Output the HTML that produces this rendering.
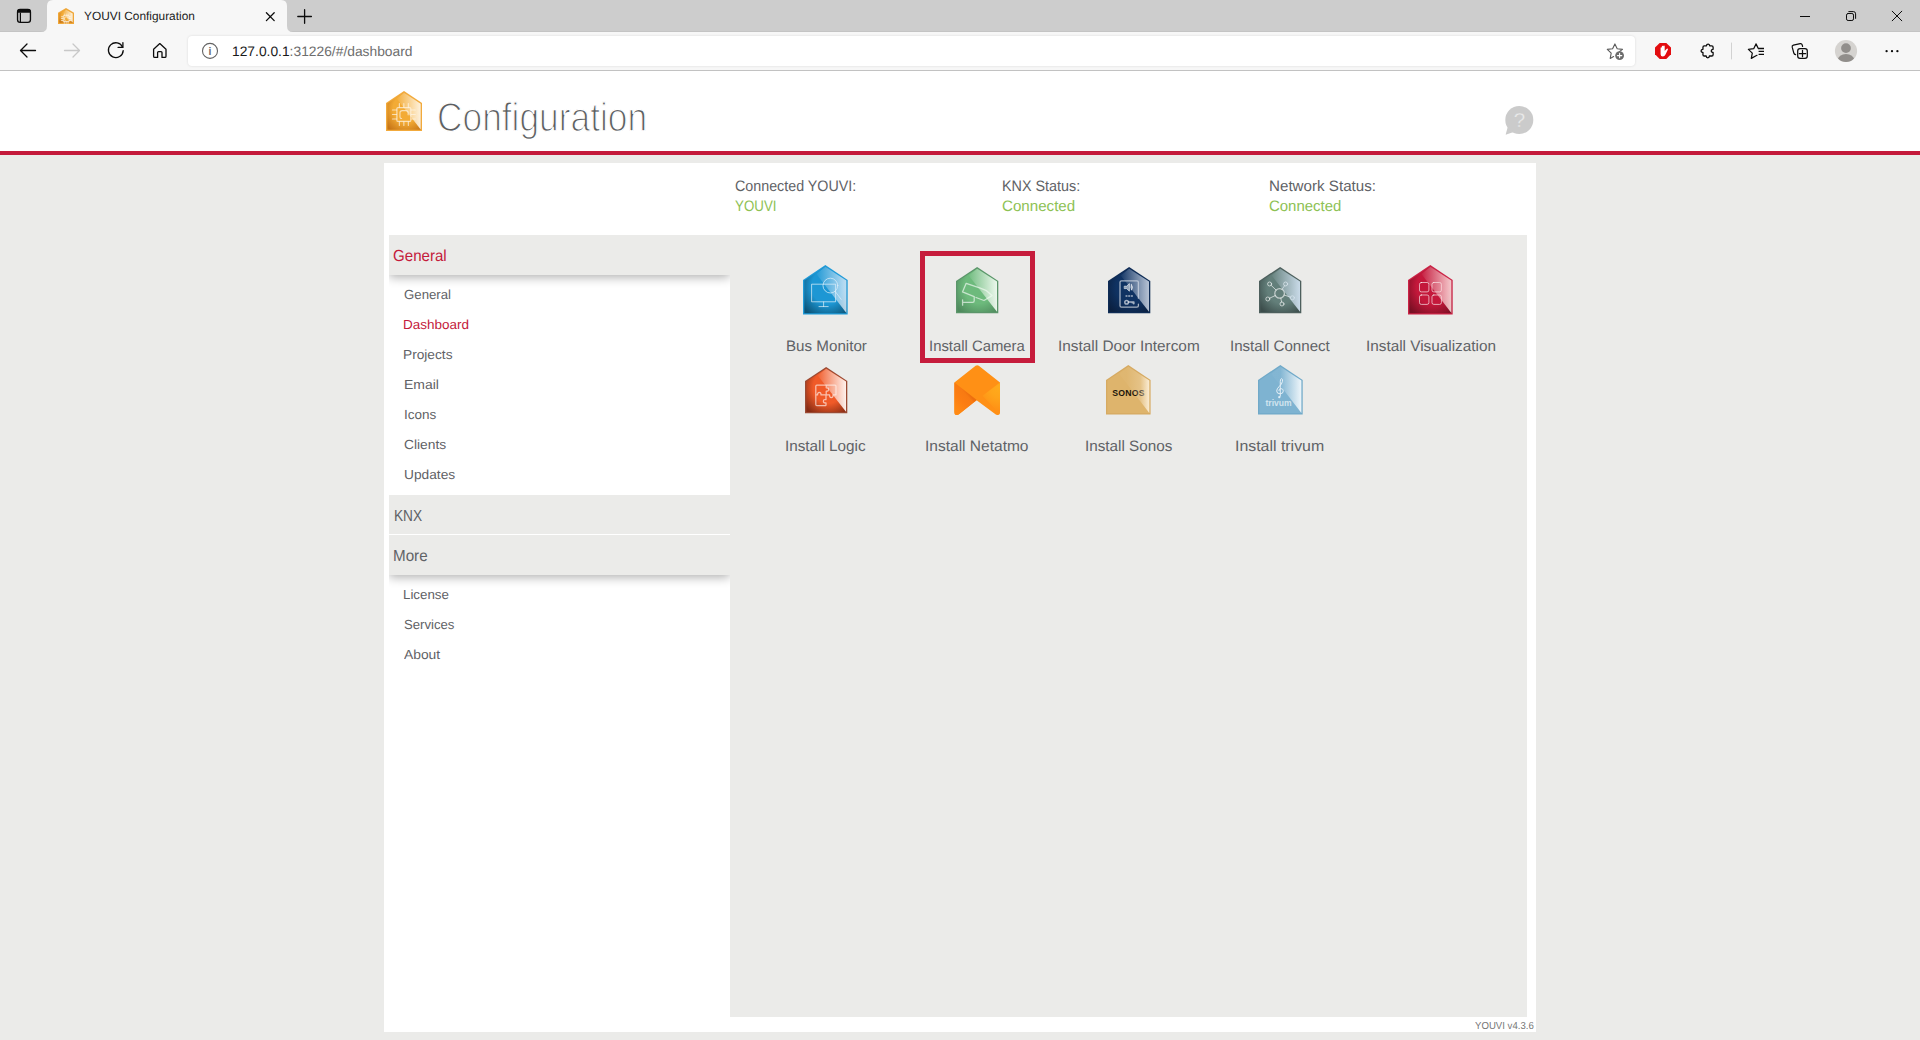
<!DOCTYPE html>
<html lang="en"><head><meta charset="utf-8"><title>YOUVI Configuration</title>
<style>
html,body{margin:0;padding:0}
body{width:1920px;height:1040px;overflow:hidden;background:#ebebe9;position:relative;font-family:"Liberation Sans", Arial, sans-serif}
.a{position:absolute}
.t{position:absolute;white-space:pre;line-height:1;text-rendering:geometricPrecision;transform-origin:0 0;font-family:"Liberation Sans", Arial, sans-serif}
svg{position:absolute;overflow:visible}

#strip{left:0;top:0;width:1920px;height:32px;background:#cdcdcd}
#bar{left:0;top:32px;width:1920px;height:38px;background:#f7f7f7}
#barline{left:0;top:70px;width:1920px;height:1px;background:#c2c2c2}
#stripline{left:0;top:31px;width:1920px;height:1px;background:#c4c4c4}
#addr{left:188px;top:36px;width:1447px;height:30px;background:#fff;border-radius:4px;box-shadow:0 0 2.5px rgba(0,0,0,.13)}
#pagebg{left:0;top:71px;width:1920px;height:80px;background:#fff}
#redbar{left:0;top:151px;width:1920px;height:4px;background:#c41a3b}
#panel{left:384px;top:163px;width:1152px;height:869px;background:#fff}
#content{left:730px;top:235px;width:797px;height:782px;background:#ebebe9}
.mh{left:389px;width:341px;height:40px;background:#ebebe9}
.shw{left:389px;width:341px;height:24px;overflow:hidden}
.shw i{position:absolute;left:0;top:-40px;width:341px;height:40px;box-shadow:0 2px 10px rgba(0,0,0,.33)}
#sel{left:920px;top:251px;width:105px;height:102px;border:5px solid #c61c3c}

</style></head><body>

<div id="strip" class="a"></div><div id="stripline" class="a"></div>
<div id="bar" class="a"></div>
<div id="barline" class="a"></div>
<svg style="left:0;top:0" width="1920" height="71" viewBox="0 0 1920 71" fill="none" stroke-linecap="round" stroke-linejoin="round">
  <path d="M41 32 Q47 32 47 26 L47 6 Q47 0 53 0 L281 0 Q287 0 287 6 L287 26 Q287 32 293 32 Z" fill="#f7f7f7"/>
  <!-- vertical tabs icon -->
  <rect x="17.55" y="9.45" width="12.9" height="12.9" rx="2.6" stroke="#0c0c0c" stroke-width="1.35"/>
  <path d="M20.4 12.6 v9.6" stroke="#0c0c0c" stroke-width="1.25" stroke-linecap="butt"/>
  <path d="M17.3 12.8 v-1.2 q0 -2.6 2.600 -2.600 h8.200 q2.600 0 2.600 2.600 v1.200 z" fill="#0c0c0c"/>
  <!-- favicon placeholder -->
  <!-- tab close -->
  <path d="M266.4 12.8 l7.8 7.8 M274.2 12.8 l-7.8 7.8" stroke="#0c0c0c" stroke-width="1.3"/>
  <!-- new tab -->
  <path d="M297.8 16.5 h13.6 M304.6 9.7 v13.6" stroke="#0c0c0c" stroke-width="1.3"/>
  <!-- window controls -->
  <path d="M1800 16.5 h10" stroke="#0c0c0c" stroke-width="1" stroke-linecap="butt"/>
  <rect x="1846.5" y="13.5" width="7" height="7" rx="1.6" stroke="#0c0c0c" stroke-width="1"/>
  <path d="M1848.8 11.6 h4.6 q2.2 0 2.2 2.2 v4.6" stroke="#0c0c0c" stroke-width="1"/>
  <path d="M1892.2 11.2 l9.6 9.6 M1901.8 11.2 l-9.6 9.6" stroke="#0c0c0c" stroke-width="1"/>
  <!-- back -->
  <path d="M35.5 50.5 H20.8 M27 44 L20.5 50.5 L27 57" stroke="#0c0c0c" stroke-width="1.3"/>
  <!-- forward (disabled) -->
  <path d="M64.5 50.5 H79.2 M73 44 L79.5 50.5 L73 57" stroke="#c8c8c8" stroke-width="1.3"/>
  <!-- refresh -->
  <path d="M122.6 47.2 A7.4 7.4 0 1 0 123.2 50.6" stroke="#0c0c0c" stroke-width="1.3"/>
  <path d="M122.9 42.6 V47.4 H118.1" stroke="#0c0c0c" stroke-width="1.3"/>
  <!-- home -->
  <path d="M153.6 49.2 L159.8 43.6 L166 49.2 V56.2 Q166 57.4 164.8 57.4 H162 V52.6 Q162 51.6 161 51.6 H158.6 Q157.6 51.6 157.6 52.6 V57.4 H154.8 Q153.6 57.4 153.6 56.2 Z" stroke="#0c0c0c" stroke-width="1.3"/>
</svg>
<div id="addr" class="a"></div>
<svg style="left:0;top:0" width="1920" height="71" viewBox="0 0 1920 71" fill="none" stroke-linecap="round" stroke-linejoin="round">
  <!-- info -->
  <circle cx="210" cy="50.9" r="7.5" stroke="#636363" stroke-width="1.1"/>
  <text x="210" y="54.6" text-anchor="middle" font-family="Liberation Sans, sans-serif" font-weight="bold" font-size="10.4" fill="#6a6a6a" stroke="none">i</text>
  <!-- add favourite star -->
  <path d="M1619.4 51.6 L1622.5 49.4 L1617.2 48.7 L1614.9 43.9 L1612.6 48.7 L1607.3 49.4 L1611.2 53.1 L1610.2 58.4 L1613.6 56.5" stroke="#5a5a5a" stroke-width="1.1"/>
  <circle cx="1619.6" cy="55.6" r="4.4" fill="#6b6b6b"/>
  <path d="M1617.4 55.6 h4.4 M1619.6 53.4 v4.4" stroke="#fff" stroke-width="1.1"/>
  <!-- ABP -->
  <path d="M1659.7 42.9 h6.6 l4.7 4.7 v6.6 l-4.7 4.7 h-6.6 l-4.7 -4.7 v-6.6 z" fill="#e30d10"/>
  <path d="M1660.6 52.6 V48 Q1660.6 47.3 1661.2 47.3 Q1661.8 47.3 1661.8 48 V46.5 Q1661.8 45.7 1662.55 45.7 Q1663.3 45.7 1663.3 46.5 V46.300 Q1663.300 45.600 1664 45.600 Q1664.700 45.600 1664.700 46.300 V51 L1666.500 49 Q1667.200 48.300 1667.800 48.800 Q1668.200 49.300 1667.700 50.100 L1665.500 54.500 Q1664.600 56.600 1662.800 56.600 Q1660.600 56.600 1660.600 54.200 Z" fill="#fff" stroke="none"/>
  <!-- extensions puzzle -->
  <path d="M1704.25 45.85 H1706.5 A1.6 1.8 0 1 1 1709.6999999999998 45.85 H1711.8 Q1713.1 45.85 1713.1 47.15 V49.3 A1.8 1.6 0 1 0 1713.1 52.5 V54.7 Q1713.1 56.0 1711.8 56.0 H1709.3999999999999 A1.6 1.8 0 1 1 1706.2 56.0 H1704.25 Q1702.95 56.0 1702.95 54.7 V52.5 A1.8 1.6 0 1 1 1702.95 49.3 V47.15 Q1702.95 45.85 1704.25 45.85 Z" stroke="#0c0c0c" stroke-width="1.3"/>
  <path d="M1731.5 43 V59" stroke="#d2d2d2" stroke-width="1"/>
  <!-- favourites -->
  <path d="M1758.6 48.500 L1758.300 48.500 L1756 43.900 L1753.700 48.700 L1748.400 49.400 L1752.300 53.100 L1751.300 58.400 L1756 55.800 L1757 55.300" stroke="#0c0c0c" stroke-width="1.25"/>
  <path d="M1758.600 48.500 h5.400 M1758.600 51.400 h5.400 M1758.600 54.300 h5.400" stroke="#0c0c0c" stroke-width="1.35" stroke-linecap="butt"/>
  <!-- collections -->
  <path d="M1795.600 54.600 Q1794.200 54.400 1793.800 53 L1792.200 47.200 Q1791.800 45.600 1793.400 45.100 L1800.200 43.700 Q1801.700 43.400 1802.200 44.900 L1802.600 46.500" stroke="#0c0c0c" stroke-width="1.2"/>
  <rect x="1797.700" y="48.700" width="9.600" height="9.600" rx="2.300" stroke="#0c0c0c" stroke-width="1.25"/>
  <path d="M1799.300 53.500 h6.400 M1802.500 50.300 v6.400" stroke="#0c0c0c" stroke-width="1.25"/>
  <!-- profile -->
  <clipPath id="pc"><circle cx="1846" cy="51" r="11"/></clipPath>
  <circle cx="1846" cy="51" r="11.1" fill="#d5d3d0"/>
  <circle cx="1846" cy="48.100" r="4.900" fill="#918e8b"/>
  <ellipse cx="1846" cy="60.300" rx="8.200" ry="6.300" fill="#918e8b" clip-path="url(#pc)"/>
  <!-- more -->
  <circle cx="1886.6" cy="51.2" r="1.15" fill="#0c0c0c"/><circle cx="1892" cy="51.2" r="1.15" fill="#0c0c0c"/><circle cx="1897.4" cy="51.2" r="1.15" fill="#0c0c0c"/>
</svg>


<div id="pagebg" class="a"></div>
<div id="redbar" class="a"></div>
<div id="panel" class="a"></div>
<div id="content" class="a"></div>
<div class="a mh" style="top:235px"></div><div class="a shw" style="top:275px"><i></i></div>
<div class="a mh" style="top:495px;height:39px"></div>
<div class="a mh" style="top:535px"></div><div class="a shw" style="top:575px"><i></i></div>
<div id="sel" class="a"></div>
<svg style="left:386px;top:91px" width="36" height="40" viewBox="0 0 36 40">
<defs><radialGradient id="Lr" cx="55%" cy="43%" r="72%"><stop offset="0" stop-color="#f3ab35"/><stop offset=".52" stop-color="#f3ab35"/><stop offset="1" stop-color="#c77617"/></radialGradient>
<linearGradient id="Ll" x1="0" x2="1" y1="0" y2="0"><stop offset="0" stop-color="#fff6e6" stop-opacity=".04"/><stop offset="1" stop-color="#fff6e6" stop-opacity="0.95"/></linearGradient></defs>
<path d="M18.0 0 L36 12.0 V40 H0 V12.0 Z" fill="#f2aa3c"/><path d="M18.0 1.56 L34.7 12.585 V38.7 H1.3 V12.585 Z" fill="url(#Lr)"/>
<g fill="none" stroke="#fff" stroke-opacity=".62" stroke-width="1" stroke-linecap="round" stroke-linejoin="round"><g transform="scale(1.02) translate(-0.3,-0.6)"><rect x="11" y="16.800" width="13.600" height="13.600" rx="1" stroke-width="1.200"/><path d="M15.600 27.600 q-1.600 0 -1.600 -1.600 v-4 q0 -2.200 2.200 -2.200 h3.600 q2.200 0 2.200 2.200 v2" stroke-width="1.100"/><path d="M13.400 16.400 v-3.600 M17.800 16.400 v-3.600 M22.200 16.400 v-3.600 M13.400 30.800 v3.600 M17.800 30.800 v3.600 M22.200 30.800 v3.600 M10.600 19.200 h-4 M10.600 23.600 h-4 M10.600 28 h-4 M25 19.200 h4 M25 23.600 h4 M25 28 h4" stroke-width="1.100"/></g></g>
<path d="M10.799999999999999 7.820000000000001 L18.0 1.8199999999999998 L34.7 12.65 V38.400000000000006 Z" fill="url(#Ll)"/>
</svg>
<svg style="left:58px;top:8px" width="16" height="16" viewBox="0 0 16 16">
<defs><radialGradient id="Fr" cx="55%" cy="43%" r="72%"><stop offset="0" stop-color="#f2aa36"/><stop offset=".52" stop-color="#f2aa36"/><stop offset="1" stop-color="#c47214"/></radialGradient>
<linearGradient id="Fl" x1="0" x2="1" y1="0" y2="0"><stop offset="0" stop-color="#fff6e6" stop-opacity=".04"/><stop offset="1" stop-color="#fff6e6" stop-opacity="0.95"/></linearGradient></defs>
<path d="M8.0 0 L16 4.8 V16 H0 V4.8 Z" fill="#f0a738"/><path d="M8.0 1.56 L14.7 5.385 V14.7 H1.3 V5.385 Z" fill="url(#Fr)"/>
<g fill="none" stroke="#fff" stroke-opacity=".62" stroke-width="1" stroke-linecap="round" stroke-linejoin="round"><g transform="scale(.43) translate(1.2,1)" stroke-width="2.4"><rect x="11" y="16.800" width="13.600" height="13.600" rx="1" /><path d="M15.600 27.600 q-1.600 0 -1.600 -1.600 v-4 q0 -2.200 2.200 -2.200 h3.600 q2.200 0 2.200 2.200 v2" /><path d="M13.400 16.400 v-3.600 M17.800 16.400 v-3.600 M22.200 16.400 v-3.600 M13.400 30.800 v3.600 M17.800 30.800 v3.600 M22.200 30.800 v3.600 M10.600 19.200 h-4 M10.600 23.600 h-4 M10.600 28 h-4 M25 19.200 h4 M25 23.600 h4 M25 28 h4" /></g></g>
<path d="M4.8 4.9399999999999995 L8.0 1.8199999999999998 L14.7 5.45 V14.399999999999999 Z" fill="url(#Fl)"/>
</svg>
<svg style="left:1500px;top:100px" width="40" height="40" viewBox="0 0 40 40">
<circle cx="19.3" cy="20" r="14" fill="#cbcbcb"/><path d="M7.600 27.600 L5.600 34.800 L14.400 31.800 Z" fill="#cbcbcb"/>
<text x="19.5" y="27" text-anchor="middle" font-family="Liberation Sans, sans-serif" font-size="20.5" fill="#ebebeb" stroke="#cbcbcb" stroke-width=".3">?</text>
</svg>
<svg style="left:803.4px;top:265.1px" width="44.7" height="49.6" viewBox="0 0 44.7 49.6">
<defs><radialGradient id="ar" cx="55%" cy="43%" r="72%"><stop offset="0" stop-color="#1d97d4"/><stop offset=".52" stop-color="#1d97d4"/><stop offset="1" stop-color="#0c5478"/></radialGradient>
<linearGradient id="al" x1="0" x2="1" y1="0" y2="0"><stop offset="0" stop-color="#dcecfa" stop-opacity=".04"/><stop offset="1" stop-color="#dcecfa" stop-opacity="0.85"/></linearGradient></defs>
<path d="M22.35 0 L44.7 14.879999999999999 V49.6 H0 V14.879999999999999 Z" fill="#1f9bd9"/><path d="M22.35 1.56 L43.400000000000006 15.465 V48.300000000000004 H1.3 V15.465 Z" fill="url(#ar)"/>
<g fill="none" stroke="#fff" stroke-opacity=".62" stroke-width="1" stroke-linecap="round" stroke-linejoin="round"><rect x="9" y="19.2" width="23.6" height="17.6"/><path d="M20.6 37 v4.400 M16 41.6 h9.2"/><circle cx="27.4" cy="20.6" r="7.4"/><path d="M32.200 26.400 l6 8"/></g>
<path d="M13.41 8.972 L22.35 1.8199999999999998 L43.400000000000006 15.53 V48.00000000000001 Z" fill="url(#al)"/>
</svg><svg style="left:955.8px;top:266.9px" width="42.3" height="46.3" viewBox="0 0 42.3 46.3">
<defs><radialGradient id="br" cx="55%" cy="43%" r="72%"><stop offset="0" stop-color="#6dba7c"/><stop offset=".52" stop-color="#6dba7c"/><stop offset="1" stop-color="#4f8a5d"/></radialGradient>
<linearGradient id="bl" x1="0" x2="1" y1="0" y2="0"><stop offset="0" stop-color="#f2fbf2" stop-opacity=".04"/><stop offset="1" stop-color="#f2fbf2" stop-opacity="0.95"/></linearGradient></defs>
<path d="M21.15 0 L42.3 13.889999999999999 V46.3 H0 V13.889999999999999 Z" fill="#5b956a"/><path d="M21.15 1.56 L41.0 14.475 V45.0 H1.3 V14.475 Z" fill="url(#br)"/>
<g fill="none" stroke="#fff" stroke-opacity=".62" stroke-width="1" stroke-linecap="round" stroke-linejoin="round"><path d="M6.5 24.9 L10.2 16.3 L24.3 21.2 L30.5 23.7 L36 28.6 L28 33.5 L20 30.5 M18.2 29.6 L6.5 24.9 M18.2 29.6 V33.8 Q18.2 35.4 16.6 35.4 H6.8 M6.6 32.8 V38.2" stroke-width="1.3"/></g>
<path d="M12.69 8.575999999999999 L21.15 1.8199999999999998 L41.0 14.54 V44.7 Z" fill="url(#bl)"/>
</svg><svg style="left:1108.1px;top:266.9px" width="42.3" height="46.3" viewBox="0 0 42.3 46.3">
<defs><radialGradient id="cr" cx="55%" cy="43%" r="72%"><stop offset="0" stop-color="#0f3262"/><stop offset=".52" stop-color="#0f3262"/><stop offset="1" stop-color="#0b2040"/></radialGradient>
<linearGradient id="cl" x1="0" x2="1" y1="0" y2="0"><stop offset="0" stop-color="#c9d3e2" stop-opacity=".04"/><stop offset="1" stop-color="#c9d3e2" stop-opacity="0.9"/></linearGradient></defs>
<path d="M21.15 0 L42.3 13.889999999999999 V46.3 H0 V13.889999999999999 Z" fill="#0f2c55"/><path d="M21.15 1.56 L41.0 14.475 V45.0 H1.3 V14.475 Z" fill="url(#cr)"/>
<g fill="none" stroke="#fff" stroke-opacity=".62" stroke-width="1" stroke-linecap="round" stroke-linejoin="round"><path d="M30.4 37.200 v1.600 q0 1.400 -1.400 1.400 h-15.600 q-1.400 0 -1.400 -1.400 v-23.600 q0 -1.400 1.400 -1.400 h15.600 q1.400 0 1.400 1.400 v16" stroke-width="1.3"/><path d="M16.600 19.200 h2 l2.800 -2.600 v7.600 l-2.800 -2.600 h-2 z" stroke-width="1" fill="#fff" fill-opacity=".55"/><path d="M23.400 17.600 q2.400 2.800 0 5.600 q-.9 -2.800 0 -5.600 z" stroke-width="1" fill="#fff" fill-opacity=".6"/><path d="M18 29 h1 M20.700 29 h1 M23.400 29 h1" stroke-width="1.300"/><circle cx="18.600" cy="35.200" r="1.800" stroke-width="1.500"/><path d="M20.600 35 h5.200 M24.200 35.600 h1.600 v1" stroke-width="1.700"/></g>
<path d="M12.69 8.575999999999999 L21.15 1.8199999999999998 L41.0 14.54 V44.7 Z" fill="url(#cl)"/>
</svg><svg style="left:1258.8px;top:266.9px" width="42.3" height="46.3" viewBox="0 0 42.3 46.3">
<defs><radialGradient id="dr" cx="55%" cy="43%" r="72%"><stop offset="0" stop-color="#637f7a"/><stop offset=".52" stop-color="#637f7a"/><stop offset="1" stop-color="#3c4d4b"/></radialGradient>
<linearGradient id="dl" x1="0" x2="1" y1="0" y2="0"><stop offset="0" stop-color="#cfe0ef" stop-opacity=".04"/><stop offset="1" stop-color="#cfe0ef" stop-opacity="0.95"/></linearGradient></defs>
<path d="M21.15 0 L42.3 13.889999999999999 V46.3 H0 V13.889999999999999 Z" fill="#4d5f5d"/><path d="M21.15 1.56 L41.0 14.475 V45.0 H1.3 V14.475 Z" fill="url(#dr)"/>
<g fill="none" stroke="#fff" stroke-opacity=".62" stroke-width="1" stroke-linecap="round" stroke-linejoin="round"><circle cx="20.600" cy="26.400" r="4.800" stroke-width="1.200"/><circle cx="10.600" cy="17" r="2" /><circle cx="26.600" cy="17" r="2"/><circle cx="33.400" cy="30.800" r="2"/><circle cx="23" cy="37" r="2"/><circle cx="8.800" cy="32" r="2"/><path d="M12.200 18.400 l4.800 4.600 M25.600 18.800 l-2.600 3.600 M25.200 28 l6.400 2.200 M21.800 31.200 l.8 3.800 M10.600 31.200 l5.600 -2.600"/></g>
<path d="M12.69 8.575999999999999 L21.15 1.8199999999999998 L41.0 14.54 V44.7 Z" fill="url(#dl)"/>
</svg><svg style="left:1408.4px;top:265.1px" width="44.7" height="49.6" viewBox="0 0 44.7 49.6">
<defs><radialGradient id="er" cx="55%" cy="43%" r="72%"><stop offset="0" stop-color="#c4183b"/><stop offset=".52" stop-color="#c4183b"/><stop offset="1" stop-color="#780f23"/></radialGradient>
<linearGradient id="el" x1="0" x2="1" y1="0" y2="0"><stop offset="0" stop-color="#fbdcdc" stop-opacity=".04"/><stop offset="1" stop-color="#fbdcdc" stop-opacity="0.9"/></linearGradient></defs>
<path d="M22.35 0 L44.7 14.879999999999999 V49.6 H0 V14.879999999999999 Z" fill="#cb2447"/><path d="M22.35 1.56 L43.400000000000006 15.465 V48.300000000000004 H1.3 V15.465 Z" fill="url(#er)"/>
<g fill="none" stroke="#fff" stroke-opacity=".62" stroke-width="1" stroke-linecap="round" stroke-linejoin="round"><rect x="11.500" y="17.500" width="9.400" height="9.400" rx="1.800"/><rect x="24" y="17.500" width="9.400" height="9.400" rx="1.800"/><rect x="11.500" y="30" width="9.400" height="9.400" rx="1.800"/><rect x="24" y="30" width="9.400" height="9.400" rx="1.800"/></g>
<path d="M13.41 8.972 L22.35 1.8199999999999998 L43.400000000000006 15.53 V48.00000000000001 Z" fill="url(#el)"/>
</svg><svg style="left:804.8px;top:366.9px" width="42.3" height="46.3" viewBox="0 0 42.3 46.3">
<defs><radialGradient id="fr" cx="55%" cy="43%" r="72%"><stop offset="0" stop-color="#f05a28"/><stop offset=".52" stop-color="#f05a28"/><stop offset="1" stop-color="#862c14"/></radialGradient>
<linearGradient id="fl" x1="0" x2="1" y1="0" y2="0"><stop offset="0" stop-color="#fff1ec" stop-opacity=".04"/><stop offset="1" stop-color="#fff1ec" stop-opacity="1"/></linearGradient></defs>
<path d="M21.15 0 L42.3 13.889999999999999 V46.3 H0 V13.889999999999999 Z" fill="#9a4a33"/><path d="M21.15 1.56 L41.0 14.475 V45.0 H1.3 V14.475 Z" fill="url(#fr)"/>
<g fill="none" stroke="#fff" stroke-opacity=".62" stroke-width="1" stroke-linecap="round" stroke-linejoin="round"><path d="M20.600 18.200 h-8.800 q-1 0 -1 1 v18.400 q0 1 1 1 h8.600 q.6 0 .6 -.6 v-2.200 q-2.600 .4 -2.600 -1.600 t2.600 -1.600 v-4.400 M20.600 18.200 q.6 0 .6 .6 v2 q2.400 -.2 2.400 1.700 t-2.400 1.700 v3.800 M10.800 28 h1.800 q-.2 -2.600 1.700 -2.600 t1.700 2.600 h4.600 M21.200 28 h3.400 q-.2 2.600 1.700 2.600 t1.700 -2.600 h2.400 q.6 0 .6 -.6 v-8.200 q0 -1 -1 -1 h-10.400" stroke-width="1.250"/></g>
<path d="M12.69 8.575999999999999 L21.15 1.8199999999999998 L41.0 14.54 V44.7 Z" fill="url(#fl)"/>
</svg><svg style="left:1106.3px;top:365.1px" width="44.6" height="49.6" viewBox="0 0 44.6 49.6">
<defs><radialGradient id="hr" cx="55%" cy="43%" r="72%"><stop offset="0" stop-color="#deb46c"/><stop offset=".52" stop-color="#deb46c"/><stop offset="1" stop-color="#deb46c"/></radialGradient>
<linearGradient id="hl" x1="0" x2="1" y1="0" y2="0"><stop offset="0.25" stop-color="#fff6e6" stop-opacity=".04"/><stop offset="0.7" stop-color="#fff6e6" stop-opacity="0.22"/><stop offset="1" stop-color="#fff6e6" stop-opacity="0.85"/></linearGradient></defs>
<path d="M22.3 0 L44.6 14.879999999999999 V49.6 H0 V14.879999999999999 Z" fill="#d6aa62"/><path d="M22.3 1.56 L43.300000000000004 15.465 V48.300000000000004 H1.3 V15.465 Z" fill="#deb46c"/>
<g fill="none" stroke="#fff" stroke-opacity=".62" stroke-width="1" stroke-linecap="round" stroke-linejoin="round"><text x="6.2" y="31.3" font-family="Liberation Sans, sans-serif" font-weight="bold" font-size="8.7" letter-spacing=".25" fill="#1b150a" stroke="none">SONOS</text></g>
<path d="M13.38 8.972 L22.3 1.8199999999999998 L43.300000000000004 15.53 V48.00000000000001 Z" fill="url(#hl)"/>
</svg><svg style="left:1257.6px;top:365.1px" width="44.7" height="49.6" viewBox="0 0 44.7 49.6">
<defs><radialGradient id="ir" cx="55%" cy="43%" r="72%"><stop offset="0" stop-color="#7eb3d1"/><stop offset=".52" stop-color="#7eb3d1"/><stop offset="1" stop-color="#7eb3d1"/></radialGradient>
<linearGradient id="il" x1="0" x2="1" y1="0" y2="0"><stop offset="0.3" stop-color="#f4f9fc" stop-opacity=".04"/><stop offset="1" stop-color="#f4f9fc" stop-opacity="0.95"/></linearGradient></defs>
<path d="M22.35 0 L44.7 14.879999999999999 V49.6 H0 V14.879999999999999 Z" fill="#70a9c8"/><path d="M22.35 1.56 L43.400000000000006 15.465 V48.300000000000004 H1.3 V15.465 Z" fill="#7eb3d1"/>
<g fill="none" stroke="#fff" stroke-opacity=".62" stroke-width="1" stroke-linecap="round" stroke-linejoin="round"><text x="7.5" y="41.1" font-family="Liberation Sans, sans-serif" font-weight="bold" font-size="8.6" fill="#dceaf2" fill-opacity=".9" stroke="none">trivum</text><path d="M22.300 31.200 V16.400 Q22.300 13.600 23.700 13.600 Q24.900 14 24.500 16.400 Q23.900 19.200 21.100 21.600 Q18.700 23.800 18.700 26 Q18.700 28.800 22.100 28.800 Q25.300 28.800 25.300 26 Q25.300 23.600 22.900 23.600 Q20.900 23.600 20.900 25.600" stroke="#e3eef5" stroke-opacity="1"/><circle cx="21.300" cy="32.200" r="1.100" fill="#e3eef5" stroke="none"/></g>
<path d="M13.41 8.972 L22.35 1.8199999999999998 L43.400000000000006 15.53 V48.00000000000001 Z" fill="url(#il)"/>
</svg>
<svg style="left:953.8px;top:364.8px" width="46.4" height="50.4" viewBox="0 0 46.4 50.4">
<defs><linearGradient id="nl" x1=".55" y1=".28" x2=".1" y2=".85"><stop offset="0" stop-color="#ee6f0e"/><stop offset=".12" stop-color="#f87a12"/><stop offset=".5" stop-color="#fc7d12"/><stop offset="1" stop-color="#ff8a14"/></linearGradient>
<radialGradient id="nr" gradientUnits="userSpaceOnUse" cx="46" cy="22" r="24"><stop offset="0" stop-color="#ffab1c"/><stop offset=".45" stop-color="#ffa41a"/><stop offset="1" stop-color="#ff9015"/></radialGradient></defs>
<path d="M21.600 0.800 Q23.200 -0.400 24.800 0.800 L46 17.600 V46.800 Q46 51.600 41.800 49.400 L22.600 35.200 L4.600 49.400 Q0.400 51.600 0.400 46.800 V17.600 Z" fill="#ff9015"/>
<path d="M0.400 17.600 L22.800 35.050 L4.600 49.400 Q0.400 51.600 0.400 46.800 Z" fill="url(#nl)"/>
<path d="M46 17.600 V46.800 Q46 48 45.600 48.800 L28.600 30.800 Z" fill="url(#nr)"/>
</svg>

<span class="t" style="left:83.76px;top:10.80px;font-size:11.9px;color:#1a1a1a;transform:scaleX(0.9982);">YOUVI Configuration</span>
<span class="t" style="left:232.03px;top:44.70px;font-size:13.7px;color:#1a1a1a;transform:scaleX(1.0091);">127.0.0.1<span style="color:#6e6e6e">:31226/#/dashboard</span></span>
<span class="t" style="left:436.93px;top:97.55px;font-size:40.3px;color:#5c5e61;transform:scaleX(0.8766);-webkit-text-stroke:1.3px #fff;">Configuration</span>
<span class="t" style="left:735.27px;top:178.70px;font-size:15.1px;color:#5f6266;transform:scaleX(0.9466);">Connected YOUVI:</span>
<span class="t" style="left:735.31px;top:198.60px;font-size:15.1px;color:#8dc153;transform:scaleX(0.8832);">YOUVI</span>
<span class="t" style="left:1001.88px;top:178.70px;font-size:15.1px;color:#5f6266;transform:scaleX(0.9519);">KNX Status:</span>
<span class="t" style="left:1001.73px;top:198.60px;font-size:15.1px;color:#8dc153;transform:scaleX(1.0022);">Connected</span>
<span class="t" style="left:1268.83px;top:178.70px;font-size:15.1px;color:#5f6266;transform:scaleX(1.0043);">Network Status:</span>
<span class="t" style="left:1268.74px;top:198.60px;font-size:15.1px;color:#8dc153;transform:scaleX(0.9910);">Connected</span>
<span class="t" style="left:393.00px;top:248.90px;font-size:16.0px;color:#c41a3b;transform:scaleX(0.9435);">General</span>
<span class="t" style="left:393.54px;top:509.00px;font-size:16.0px;color:#5f6266;transform:scaleX(0.8549);">KNX</span>
<span class="t" style="left:393.41px;top:548.80px;font-size:16.0px;color:#5f6266;transform:scaleX(0.9488);">More</span>
<span class="t" style="left:403.71px;top:287.75px;font-size:13.2px;color:#5f6266;transform:scaleX(1.0022);">General</span>
<span class="t" style="left:403.47px;top:317.75px;font-size:13.2px;color:#c41a3b;transform:scaleX(1.0231);">Dashboard</span>
<span class="t" style="left:403.45px;top:347.75px;font-size:13.2px;color:#5f6266;transform:scaleX(1.0390);">Projects</span>
<span class="t" style="left:403.63px;top:377.75px;font-size:13.2px;color:#5f6266;transform:scaleX(1.0600);">Email</span>
<span class="t" style="left:403.62px;top:407.75px;font-size:13.2px;color:#5f6266;transform:scaleX(1.0216);">Icons</span>
<span class="t" style="left:403.65px;top:437.75px;font-size:13.2px;color:#5f6266;transform:scaleX(1.0455);">Clients</span>
<span class="t" style="left:403.66px;top:467.75px;font-size:13.2px;color:#5f6266;transform:scaleX(1.0409);">Updates</span>
<span class="t" style="left:403.48px;top:587.90px;font-size:13.2px;color:#5f6266;transform:scaleX(1.0104);">License</span>
<span class="t" style="left:403.55px;top:617.90px;font-size:13.2px;color:#5f6266;transform:scaleX(0.9968);">Services</span>
<span class="t" style="left:403.96px;top:647.80px;font-size:13.2px;color:#5f6266;transform:scaleX(1.0485);">About</span>
<span class="t" style="left:785.53px;top:338.70px;font-size:15.1px;color:#5f6266;transform:scaleX(1.0042);">Bus Monitor</span>
<span class="t" style="left:928.58px;top:338.70px;font-size:15.1px;color:#5f6266;transform:scaleX(0.9841);">Install Camera</span>
<span class="t" style="left:1057.64px;top:338.70px;font-size:15.1px;color:#5f6266;transform:scaleX(1.0176);">Install Door Intercom</span>
<span class="t" style="left:1229.96px;top:338.70px;font-size:15.1px;color:#5f6266;transform:scaleX(1.0000);">Install Connect</span>
<span class="t" style="left:1365.94px;top:338.70px;font-size:15.1px;color:#5f6266;transform:scaleX(1.0147);">Install Visualization</span>
<span class="t" style="left:785.44px;top:438.70px;font-size:15.1px;color:#5f6266;transform:scaleX(1.0111);">Install Logic</span>
<span class="t" style="left:925.32px;top:438.70px;font-size:15.1px;color:#5f6266;transform:scaleX(1.0282);">Install Netatmo</span>
<span class="t" style="left:1084.75px;top:438.70px;font-size:15.1px;color:#5f6266;transform:scaleX(1.0109);">Install Sonos</span>
<span class="t" style="left:1235.19px;top:438.70px;font-size:15.1px;color:#5f6266;transform:scaleX(1.0525);">Install trivum</span>
<span class="t" style="left:1475.13px;top:1022.00px;font-size:10.2px;color:#777;transform:scaleX(0.9435);">YOUVI v4.3.6</span>
</body></html>
